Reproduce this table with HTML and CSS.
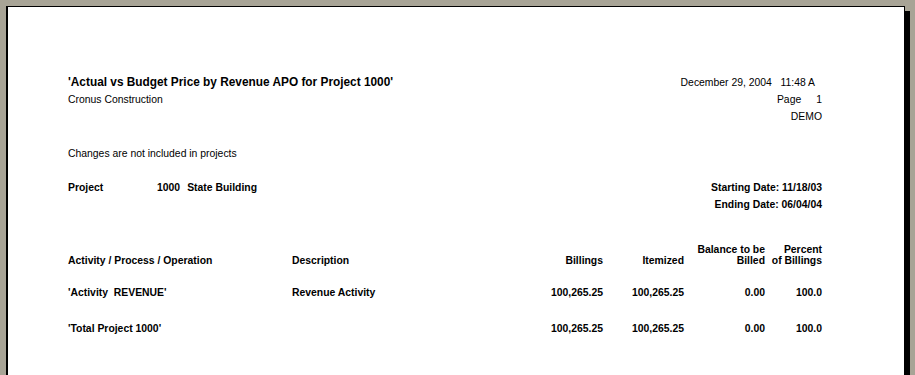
FILE: index.html
```html
<!DOCTYPE html>
<html>
<head>
<meta charset="utf-8">
<link rel="stylesheet" href="styles.css">
</head>
<body>
<div class="page">
  <div class="head">
    <div class="head-left">
      <div class="title">'Actual vs Budget Price by Revenue APO for Project 1000'</div>
      <div class="line">Cronus Construction</div>
    </div>
    <div class="head-right">
      <div class="line date">December 29, 2004&nbsp;&nbsp;&nbsp;11:48 A</div>
      <div class="line"><span>Page</span><span class="pnum">1</span></div>
      <div class="line">DEMO</div>
    </div>
  </div>

  <div class="note line">Changes are not included in projects</div>

  <div class="project">
    <div class="proj-left bold line">
      <span class="proj-label">Project</span>
      <span class="proj-no">1000</span>
      <span>State Building</span>
    </div>
    <div class="proj-right bold">
      <div class="line">Starting Date: 11/18/03</div>
      <div class="line">Ending Date: 06/04/04</div>
    </div>
  </div>

  <div class="grid bold">
    <div class="th">Activity / Process / Operation</div>
    <div class="th">Description</div>
    <div class="th num">Billings</div>
    <div class="th num">Itemized</div>
    <div class="th num">Balance to be<br>Billed</div>
    <div class="th num">Percent<br>of Billings</div>

    <div class="td r1">'Activity&nbsp; REVENUE'</div>
    <div class="td r1">Revenue Activity</div>
    <div class="td r1 num">100,265.25</div>
    <div class="td r1 num">100,265.25</div>
    <div class="td r1 num">0.00</div>
    <div class="td r1 num">100.0</div>

    <div class="td r2">'Total Project 1000'</div>
    <div class="td r2"></div>
    <div class="td r2 num">100,265.25</div>
    <div class="td r2 num">100,265.25</div>
    <div class="td r2 num">0.00</div>
    <div class="td r2 num">100.0</div>
  </div>
</div>
</body>
</html>
```
FILE: styles.css
```css
html, body {
  margin: 0;
  padding: 0;
}
body {
  background: #a8a496;
  font-family: "Liberation Sans", Arial, sans-serif;
  font-size: 10.4px;
  color: #000;
  overflow: hidden;
  height: 375px;
}
.page {
  margin: 6px 0 0 6px;
  width: 899px;
  height: 500px;
  box-sizing: border-box;
  background: #fff;
  border-left: 2px solid #000;
  border-top: 1px solid #000;
  border-right: 1px solid #000;
  box-shadow: 5px 5px 0 #000;
  padding: 66px 82px 0 60px;
}
.line {
  line-height: 17px;
}
.bold {
  font-weight: bold;
}
.head {
  display: flex;
  justify-content: space-between;
}
.title {
  font-size: 11.85px;
  font-weight: bold;
  line-height: 18px;
}
.head-right {
  padding-top: 1px;
  text-align: right;
}
.date {
  margin-right: 7px;
}
.pnum {
  margin-left: 15px;
}
.note {
  margin-top: 20px;
}
.project {
  margin-top: 17px;
  display: flex;
  justify-content: space-between;
}
.proj-left {
  display: flex;
}
.proj-label {
  width: 89px;
}
.proj-no {
  margin-right: 7px;
}
.proj-right {
  text-align: right;
}
.grid {
  margin-top: 31px;
  display: grid;
  grid-template-columns: 224px 1fr 81px 81px 81px 57px;
}
.th {
  line-height: 11px;
  align-self: end;
}
.td {
  line-height: 17px;
}
.r1 {
  margin-top: 18px;
}
.r2 {
  margin-top: 19px;
}
.num {
  text-align: right;
}
```
